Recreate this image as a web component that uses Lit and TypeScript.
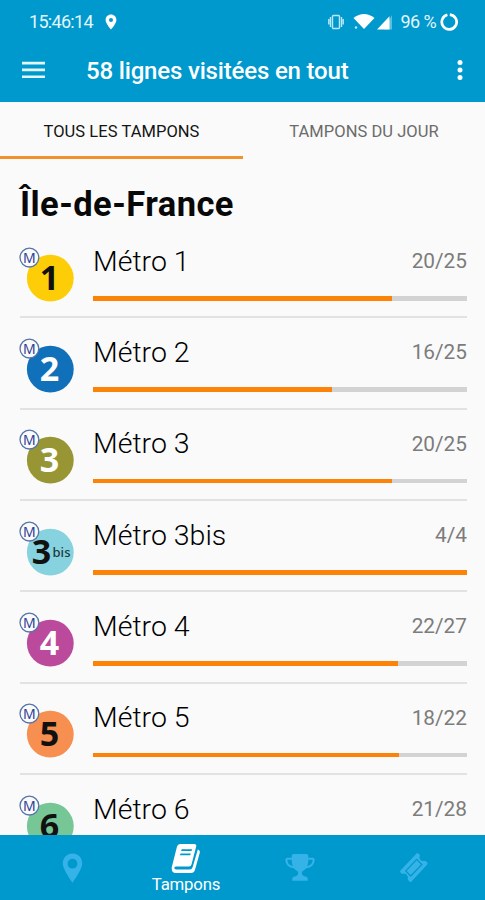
import { LitElement, html, svg, css } from "lit";
import { customElement, property } from "lit/decorators.js";

interface Line {
  name: string;
  digit: string;
  bis?: boolean;
  color: string;
  ink: string;
  done: number;
  total: number;
}

const LINES: Line[] = [
  { name: "Métro 1", digit: "1", color: "#fdce08", ink: "#111", done: 20, total: 25 },
  { name: "Métro 2", digit: "2", color: "#1170ba", ink: "#fff", done: 16, total: 25 },
  { name: "Métro 3", digit: "3", color: "#989634", ink: "#fff", done: 20, total: 25 },
  { name: "Métro 3bis", digit: "3", bis: true, color: "#86d2de", ink: "#111", done: 4, total: 4 },
  { name: "Métro 4", digit: "4", color: "#bb4a9c", ink: "#fff", done: 22, total: 27 },
  { name: "Métro 5", digit: "5", color: "#f68f4f", ink: "#111", done: 18, total: 22 },
  { name: "Métro 6", digit: "6", color: "#76c696", ink: "#111", done: 21, total: 28 },
];

@customElement("line-row")
export class LineRow extends LitElement {
  @property({ attribute: false }) line!: Line;

  static styles = css`
    :host {
      display: grid;
      grid-template-columns: 73px 1fr;
      box-sizing: border-box;
      height: 91.35px;
      margin: 0 18px 0 20px;
      border-bottom: 2px solid #e2e2e2;
    }
    .mark {
      display: block;
      width: 56px;
      height: 58px;
      margin: 18.5px 0 0 -1px;
    }
    .digit {
      font: 700 34px "Noto Sans", sans-serif;
    }
    .bis {
      font: 500 13px "Noto Sans", sans-serif;
    }
    .m {
      font: 400 14px "Noto Sans", sans-serif;
      fill: #2c3f98;
    }
    .body {
      display: flex;
      flex-direction: column;
    }
    .head {
      display: flex;
      justify-content: space-between;
      align-items: center;
      height: 36px;
      margin-top: 16px;
    }
    .name {
      font-size: 28.5px;
      font-weight: 300;
      color: #000;
      white-space: nowrap;
    }
    .count {
      font-size: 20.8px;
      color: #7c7c7c;
    }
    .track {
      height: 4.600px;
      margin-top: 17px;
      background: #d3d3d3;
    }
    .fill {
      height: 100%;
      background: #fd8208;
    }
  `;

  render() {
    const l = this.line;
    return html`
      <svg class="mark" viewBox="0 0 56 58">
        <circle cx="31.3" cy="32.2" r="23.4" fill=${l.color} />
        <text class="digit" x=${l.bis ? 22.5 : 30.5} y="44.3" text-anchor="middle" fill=${l.ink}>${l.digit}</text>
        ${l.bis ? svg`<text class="bis" x="33.5" y="36.5" textLength="18" fill="#1c3a40">bis</text>` : ""}
        <circle cx="10.4" cy="11.6" r="9.4" fill="#fafafa" stroke="#5673aa" stroke-width="1.3" />
        <text class="m" x="10.4" y="16.6" text-anchor="middle">M</text>
      </svg>
      <div class="body">
        <div class="head">
          <span class="name">${l.name}</span>
          <span class="count">${l.done}/${l.total}</span>
        </div>
        <div class="track"><div class="fill" style="width:${(l.done / l.total) * 100}%"></div></div>
      </div>
    `;
  }
}

@customElement("app-root")
export class AppRoot extends LitElement {
  static styles = css`
    :host {
      display: flex;
      flex-direction: column;
      width: 485px;
      height: 900px;
      overflow: hidden;
      background: #fafafa;
      font-family: Roboto, sans-serif;
    }
    svg {
      display: block;
      flex: none;
    }
    .top {
      flex: none;
      height: 102px;
      background: #0099cd;
      color: #fff;
    }
    .status {
      display: flex;
      align-items: center;
      height: 43px;
      padding: 0 27px 0 29px;
      font-size: 18px;
    }
    .clock {
      width: 76px;
      letter-spacing: -0.7px;
      color: #e4f5fb;
    }
    .tray {
      display: flex;
      align-items: center;
      margin-left: auto;
    }
    .battery {
      margin: 0 4px 0 9px;
      font-size: 18px;
      letter-spacing: -0.6px;
      color: #e4f5fb;
      white-space: nowrap;
    }
    .bar {
      display: flex;
      align-items: center;
      height: 54px;
      padding: 0 22px 0 22px;
    }
    .title {
      margin: 2px auto 0 41px;
      font-size: 24px;
      font-weight: 500;
      letter-spacing: -0.17px;
    }
    .tabs {
      display: grid;
      grid-template-columns: 243px 242px;
      flex: none;
      height: 57px;
    }
    .tab {
      display: flex;
      align-items: center;
      justify-content: center;
      box-sizing: border-box;
      padding-top: 5px;
      border-bottom: 3px solid transparent;
      font-size: 16.5px;
      letter-spacing: 0.05px;
      color: #6b6b6b;
    }
    .active {
      border-color: #f0922e;
      color: #141414;
    }
    .list {
      flex: 1;
      min-height: 0;
      overflow: hidden;
    }
    .region {
      height: 68px;
      margin: 0 0 0 20px;
      padding-top: 22px;
      box-sizing: border-box;
      font-size: 34.5px;
      line-height: 46px;
      font-weight: 700;
      letter-spacing: 0.45px;
      color: #080808;
    }
    .nav {
      display: grid;
      grid-template-columns: 129px 114px 114px 128px;
      flex: none;
      height: 65px;
      background: #0099cd;
      color: #35b3e9;
    }
    .item {
      display: flex;
      flex-direction: column;
      align-items: center;
      justify-content: center;
    }
    .first {
      align-items: flex-start;
      padding-left: 62px;
    }
    .last {
      align-items: flex-start;
      padding-left: 42px;
    }
    .current {
      justify-content: flex-start;
      padding-top: 8px;
      color: #fff;
    }
    .label {
      font-size: 16.8px;
      line-height: 20px;
      letter-spacing: -0.2px;
    }
  `;

  render() {
    return html`
      <header class="top">
        <div class="status">
          <span class="clock">15:46:14</span>
          <svg width="12" height="16" viewBox="0 0 12 16">
            <path fill="#fff" fill-rule="evenodd" d="M6 .5C2.900.5.6 2.900.6 5.900.6 9.500 6 15.500 6 15.500s5.400-6 5.400-9.600C11.400 2.900 9.100.5 6 .5zm0 3.400a2 2 0 1 1 0 4 2 2 0 0 1 0-4z" />
          </svg>
          <div class="tray">
            <svg width="16" height="16" viewBox="0 0 16 16" fill="none" stroke="#bde7f5" stroke-width="1.4">
              <rect x="4.500" y="1.500" width="7" height="13" rx="1" />
              <path d="M2.500 3v10M13.500 3v10M.8 5v5.500M15.200 5v5.500" />
            </svg>
            <svg width="48" height="17" viewBox="0 0 48 17" fill="#fff">
              <path d="M9.500 5Q20 -3 30.500 5L20 16z" />
              <circle cx="12" cy="14.500" r="1.200" fill="#bde7f5" />
              <path d="M48 2v14.500H40z" fill="#5bbfe0" />
              <path d="M45.500 3.200v13.300H33z" />
            </svg>
            <span class="battery">96 %</span>
            <svg width="18" height="18" viewBox="0 0 18 18" fill="none" stroke="#fff" stroke-width="2.700">
              <path d="M9.800 1.600A7.400 7.400 0 1 1 7.400 1.800" />
            </svg>
          </div>
        </div>
        <div class="bar">
          <svg width="23" height="18" viewBox="0 0 23 18">
            <path fill="#e4f5fb" d="M0 .8h23v2.700H0zM0 7.600h23v2.700H0zM0 14.400h23v2.700H0z" />
          </svg>
          <span class="title">58 lignes visitées en tout</span>
          <svg width="6" height="20" viewBox="0 0 6 20" fill="#fff">
            <circle cx="3" cy="2.500" r="2.500" />
            <circle cx="3" cy="10" r="2.500" />
            <circle cx="3" cy="17.500" r="2.500" />
          </svg>
        </div>
      </header>
      <div class="tabs">
        <div class="tab active">TOUS LES TAMPONS</div>
        <div class="tab">TAMPONS DU JOUR</div>
      </div>
      <main class="list">
        <h1 class="region">Île-de-France</h1>
        ${LINES.map((line) => html`<line-row .line=${line}></line-row>`)}
      </main>
      <nav class="nav">
        <div class="item first">
          <svg width="21" height="30" viewBox="0 0 21 30">
            <path fill="currentColor" fill-rule="evenodd" d="M10.500.5C4.900.5.8 4.900.8 10.200.8 16.600 10.500 29.500 10.500 29.500s9.700-12.900 9.700-19.300C20.200 4.900 16.100.5 10.500.5zm0 5.300a4.900 4.900 0 1 1 0 9.800 4.900 4.900 0 0 1 0-9.800z" />
          </svg>
        </div>
        <div class="item current">
          <svg width="30" height="31" viewBox="0 0 30 31">
            <path fill="currentColor" fill-rule="evenodd" d="M9 1H23.200Q25.800 1 25.200 3.500L20.500 21.500Q20 23.500 18 23.500H5Q3 23.500 3.400 25.200Q3.800 26.500 5.500 26.500H18.500Q21 26.500 21.700 24L26.800 6.500Q29.500 7.500 28.700 10L24 26.800Q23 30 20 30H5Q.3 30 .7 24.500L6 3.500Q6.800 1 9 1zM10.700 6.200L10.100 8H20.500L21.100 6.200zM9.500 10.500L8.900 12.300H19.200L19.800 10.500z" />
          </svg>
          <span class="label">Tampons</span>
        </div>
        <div class="item">
          <svg width="32" height="29" viewBox="0 0 32 29">
            <path fill="currentColor" d="M9.500 1H22.500Q24.200 1 24.200 2.700V9Q23.500 15.500 18.500 18.300Q17.800 19 17.800 20.200Q18 22.800 20.200 23.200Q23.700 23.800 23.700 25.500V27.800H8.300V25.500Q8.300 23.800 11.800 23.200Q14 22.800 14.200 20.200Q14.200 19 13.500 18.300Q8.500 15.500 7.800 9V2.700Q7.800 1 9.500 1z" />
            <path fill="none" stroke="currentColor" stroke-width="2.100" d="M8.500 5.800H3.500Q2.300 5.800 2.300 7Q2.500 13.800 11.500 14.600M23.500 5.800H28.500Q29.700 5.800 29.700 7Q29.500 13.800 20.500 14.600" />
          </svg>
        </div>
        <div class="item last">
          <svg width="30" height="31" viewBox="0 0 30 31">
            <path fill="currentColor" fill-rule="evenodd" d="M17.600 1.600Q18.500.6 19.600 1.700L20.900 3.100Q19.600 6 21.500 7.900Q23.600 9.800 26.300 8.700L28.200 10.500Q29.200 11.500 28.200 12.600L12.500 29.500Q11.500 30.500 10.500 29.500L8.700 27.500Q9.500 24.500 7.700 22.800Q5.800 21 3.100 21.900L1.500 20.500Q.5 19.500 1.500 18.400zM17.700 6.400L5.900 18.900L11.700 25L23.800 12.500z" />
            <path fill="currentColor" d="M17.700 8.200L22 12.500L11.700 23.100L7.600 18.900z" />
          </svg>
        </div>
      </nav>
    `;
  }
}
